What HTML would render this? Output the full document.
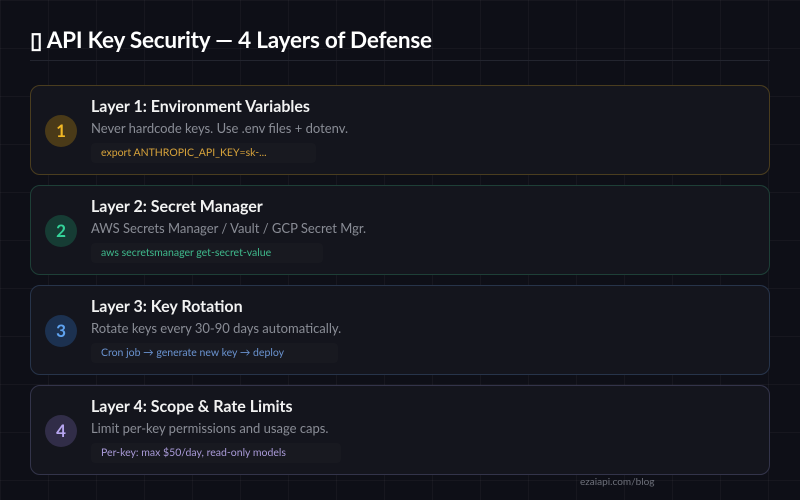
<!DOCTYPE html><html><head><style>
body{margin:0;width:800px;height:500px;overflow:hidden;background:#0e0f17;background-image:linear-gradient(rgba(255,255,255,0.035) 1px,transparent 1px),linear-gradient(90deg,rgba(255,255,255,0.035) 1px,transparent 1px);background-size:48px 48px;background-position:0 0;font-family:"Lato","Liberation Sans",sans-serif;position:relative;color:#fff}
h1{position:absolute;left:30px;top:26px;margin:0;font-size:22.5px;font-weight:bold;letter-spacing:-0.2px}
.hr{position:absolute;left:30px;right:30px;top:60px;height:1px;background:#23252f}
.card{position:absolute;left:30px;width:738px;height:88px;border-radius:10px;background:#14151d;border:1px solid}
.n{position:absolute;left:14px;top:29px;width:32px;height:32px;border-radius:50%;text-align:center;line-height:32px;font-weight:bold;font-size:17px}
.t{position:absolute;left:60px;top:11px;font-size:16px;font-weight:bold;color:#f2f2f2}
.d{position:absolute;left:60px;top:34px;font-size:13px;color:#8a8d96}
.c{position:absolute;left:60px;top:57px;width:210px;height:20px;background:#181920;border-radius:4px;font-size:10.5px;line-height:20px;padding-left:10px}
.f{position:absolute;left:580px;top:476px;font-size:10px;color:#6d707a}
</style></head><body>
<h1>▯ API Key Security — 4 Layers of Defense</h1>
<div class="hr"></div>
<div class="card" style="top:85px;border-color:#4a3d1f"><div class="n" style="background:#4a3a18;color:#f2b825">1</div><div class="t">Layer 1: Environment Variables</div><div class="d">Never hardcode keys. Use .env files + dotenv.</div><div class="c" style="color:#d6a23a;width:215px">export ANTHROPIC_API_KEY=sk-...</div></div>
<div class="card" style="top:185px;border-color:#1e3f37"><div class="n" style="background:#163c34;color:#34d399">2</div><div class="t">Layer 2: Secret Manager</div><div class="d">AWS Secrets Manager / Vault / GCP Secret Mgr.</div><div class="c" style="color:#3fb98c;width:222px">aws secretsmanager get-secret-value</div></div>
<div class="card" style="top:285px;border-color:#27344a"><div class="n" style="background:#1c3150;color:#5fa3f0">3</div><div class="t">Layer 3: Key Rotation</div><div class="d">Rotate keys every 30-90 days automatically.</div><div class="c" style="color:#6a93d0;width:237px">Cron job → generate new key → deploy</div></div>
<div class="card" style="top:385px;border-color:#33344a"><div class="n" style="background:#312d48;color:#b7a6f0">4</div><div class="t">Layer 4: Scope &amp; Rate Limits</div><div class="d">Limit per-key permissions and usage caps.</div><div class="c" style="color:#a99ad8;width:240px">Per-key: max $50/day, read-only models</div></div>
<div class="f">ezaiapi.com/blog</div>
</body></html>
